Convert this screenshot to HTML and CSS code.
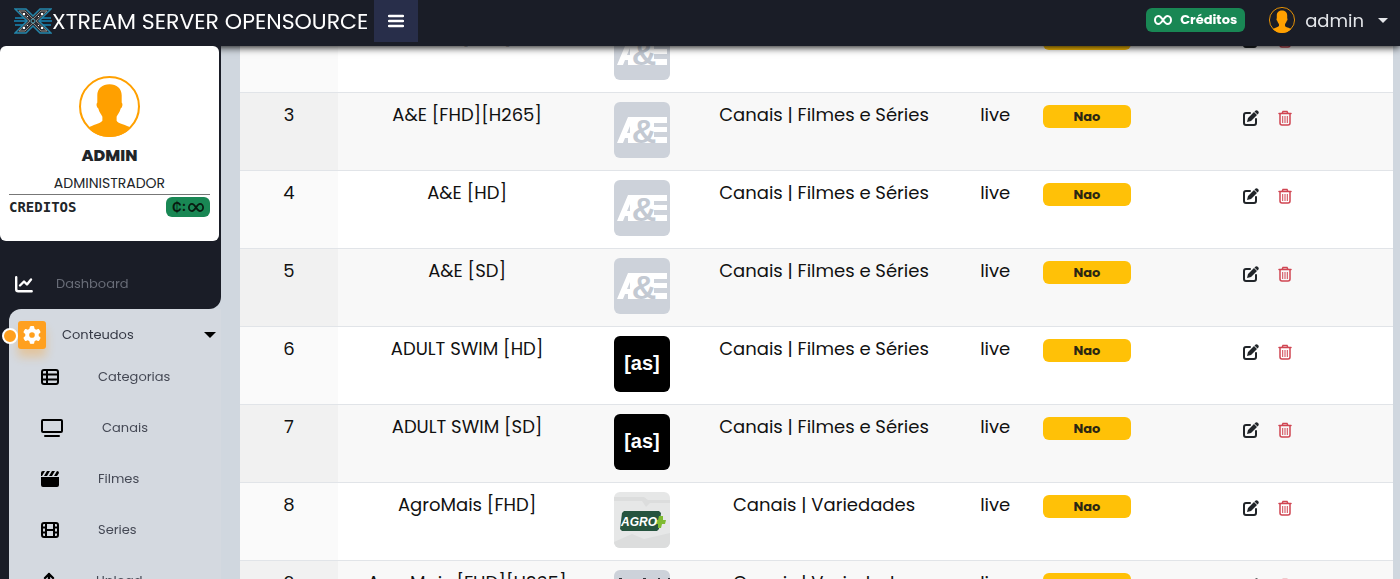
FILE: index.html
```html
<!DOCTYPE html>
<html lang="pt-BR">
<head>
    <meta charset="UTF-8">
    <meta name="viewport" content="width=device-width, initial-scale=1.0">
    <title>Xtream Server Opensource</title>
    <link rel="stylesheet" href="styles.css">
</head>
<body>
    <!-- Ícones usados mais de uma vez -->
    <svg class="sprite" aria-hidden="true">
        <symbol id="avatar" viewBox="0 0 60 60">
            <circle cx="30" cy="30" r="29" fill="none" stroke="currentColor" stroke-width="2"/>
            <path fill="currentColor" d="M30 8c7 0 12 4 12 11v7c1 1 1 3 0 5l-1 1c-1 4-3 6-4 8v4c1 3 10 4 14 7-5 6-12 9-21 9s-16-3-21-9c4-3 12-4 14-7v-4c-1-2-3-4-4-8l-1-1c-1-2-1-4 0-5v-7c0-7 5-11 12-11z"/>
        </symbol>
        <symbol id="infinity" viewBox="0 0 18 10">
            <path fill="none" stroke="currentColor" stroke-width="2" d="M9 5C7 2 6 1 4.500 1a3.500 4 0 0 0 0 8C6 9 7 8 9 5s3-4 4.500-4a3.500 4 0 0 1 0 8C12 9 11 8 9 5z"/>
        </symbol>
        <symbol id="edit" viewBox="0 0 16 16">
            <path fill="none" stroke="currentColor" stroke-width="2" stroke-linecap="round" d="M7 3H3a2 2 0 0 0-2 2v8a2 2 0 0 0 2 2h8a2 2 0 0 0 2-2V9"/>
            <path fill="currentColor" d="M11 2l3 3-6 6-4 1 1-4zM12 1c1-1 2-1 3 0s1 2 0 3l-.5.5-3-3z"/>
        </symbol>
        <symbol id="trash" viewBox="0 0 14 16">
            <path fill="none" stroke="currentColor" stroke-width="1.500" stroke-linecap="round" d="M1 3.500h12M4 3.500l1-2h4l1 2M2 3.500V13a2 2 0 0 0 2 2h6a2 2 0 0 0 2-2V3.500"/>
            <path fill="none" stroke="currentColor" d="M4.700 6v7M7 6v7M9.300 6v7"/>
        </symbol>
        <symbol id="ae" viewBox="0 0 56 56">
            <rect width="56" height="56" fill="#cdd2da"/>
            <path fill="#fff" d="M3 41L14 15h39v6H40v4h13v5H40v5h13v6H14v-5h-3l-2 5zM13 31h3v-7z"/>
        </symbol>
        <symbol id="agro" viewBox="0 0 56 56">
            <rect width="56" height="56" fill="#e6e7e7"/>
            <path fill="#dcdddd" d="M0 5h30l4 3h22v3H36l-4 4-4-6H0zM0 50l18-8 12 5 26-6v15H0z"/>
            <path fill="#26543f" d="M10 19h35l2 2-2 16-2 2H8l-2-2 2-16z"/>
            <path fill="#7fbb32" d="M45 24h4v4h3l-1 4h-3l-1 4h-3v-4h-4l1-4h3z"/>
        </symbol>
    </svg>

    <header class="navbar">
        <a class="brand" href="#">
            <svg class="brand-logo" viewBox="0 0 38 26" aria-hidden="true">
                <path stroke="#176b91" stroke-width="2" d="M1 10h36M0 13h38M1 17h36"/>
                <path fill="#2b2e35" stroke="#2385aa" stroke-width="1.500" d="M1 1h11l7 7 7-7h11L25 13l12 12H26l-7-7-7 7H1l12-12z"/>
                <path fill="none" stroke="#8f8782" stroke-width="1" d="M5 3h6l8 8 8-8h6L22 13l11 10h-6l-8-8-8 8H5l11-10z"/>
                <circle cx="19" cy="13" r="2" fill="#222" stroke="#55a4bb"/>
                <path fill="#fff" d="M9 5h2v2H9zM27 5h2v2h-2zM9 19h2v2H9zM27 19h2v2h-2zM13 8h1v1h-1zM24 8h1v1h-1zM13 17h1v1h-1zM24 17h1v1h-1z"/>
            </svg>
            <span>XTREAM SERVER OPENSOURCE</span>
        </a>
        <button class="toggle" type="button" aria-label="Menu">
            <svg width="16" height="14" viewBox="0 0 16 14"><path stroke="#fff" stroke-width="2.400" stroke-linecap="round" d="M1 2h14M1 7h14M1 12h14"/></svg>
        </button>
        <div class="nav-right">
            <a class="credits" href="#"><svg width="18" height="10"><use href="#infinity"/></svg>Créditos</a>
            <button class="user" type="button">
                <svg class="orange" width="26" height="26"><use href="#avatar"/></svg>
                <span>admin</span>
                <i class="caret"></i>
            </button>
        </div>
    </header>

    <aside class="sidebar">
        <div class="side-top">
            <div class="profile">
                <svg class="orange" width="61" height="61"><use href="#avatar"/></svg>
                <h2>ADMIN</h2>
                <p class="role">ADMINISTRADOR</p>
                <div class="balance">
                    <strong>CREDITOS</strong>
                    <span class="balance-badge">₵: <svg width="16" height="9"><use href="#infinity"/></svg></span>
                </div>
            </div>
            <a class="item dashboard" href="#">
                <svg width="18" height="17" viewBox="0 0 18 17"><path fill="none" stroke="#fff" stroke-width="2.400" stroke-linecap="round" stroke-linejoin="round" d="M1.200 1.200v12q0 2 2 2h13.500M5 9.500l4-4 3 3 4-5"/></svg>
                <span>Dashboard</span>
            </a>
        </div>
        <nav class="side-menu">
            <div class="panel">
                <button class="group" type="button">
                    <i class="dot"></i>
                    <span class="gear">
                        <svg width="18" height="18" viewBox="0 0 512 512"><path fill="#fff" d="M495.900 166.600c3.200 8.700 .5 18.400-6.400 24.600l-43.300 39.400c1.100 8.300 1.700 16.800 1.700 25.400s-.6 17.100-1.700 25.400l43.300 39.400c6.900 6.200 9.600 15.900 6.400 24.600c-4.400 11.900-9.700 23.300-15.800 34.300l-4.700 8.100c-6.600 11-14 21.400-22.100 31.200c-5.900 7.200-15.700 9.600-24.500 6.800l-55.700-17.700c-13.400 10.300-28.200 18.900-44 25.400l-12.500 57.100c-2 9.100-9 16.300-18.200 17.800c-13.800 2.300-28 3.500-42.500 3.500s-28.700-1.200-42.500-3.500c-9.200-1.500-16.200-8.700-18.200-17.800l-12.500-57.100c-15.800-6.500-30.600-15.100-44-25.400L83.100 425.900c-8.800 2.800-18.600 .3-24.500-6.800c-8.100-9.800-15.500-20.200-22.100-31.200l-4.700-8.100c-6.100-11-11.400-22.400-15.800-34.300c-3.200-8.700-.5-18.400 6.400-24.600l43.300-39.400C64.600 273.100 64 264.600 64 256s.6-17.100 1.700-25.400L22.400 191.200c-6.900-6.200-9.600-15.900-6.400-24.600c4.400-11.900 9.700-23.300 15.800-34.300l4.700-8.100c6.600-11 14-21.400 22.100-31.200c5.900-7.200 15.700-9.600 24.500-6.800l55.700 17.700c13.400-10.300 28.200-18.900 44-25.400l12.500-57.100c2-9.100 9-16.300 18.200-17.800C227.300 1.200 241.500 0 256 0s28.700 1.200 42.500 3.500c9.200 1.500 16.200 8.700 18.200 17.800l12.500 57.100c15.800 6.500 30.600 15.100 44 25.400l55.700-17.700c8.800-2.800 18.600-.3 24.500 6.800c8.100 9.800 15.500 20.200 22.100 31.200l4.700 8.100c6.100 11 11.400 22.400 15.800 34.300zM256 336a80 80 0 1 0 0-160 80 80 0 1 0 0 160z"/></svg>
                    </span>
                    <span>Conteudos</span>
                    <i class="caret"></i>
                </button>
                <a class="item" href="#">
                    <svg width="18" height="16" viewBox="0 0 18 16"><path fill="none" stroke="#000" stroke-width="2" d="M3 1h12q2 0 2 2v10q0 2-2 2H3q-2 0-2-2V3q0-2 2-2zM1 5.500h16M1 10.500h16M6 1v14"/></svg>
                    <span>Categorias</span>
                </a>
                <a class="item" href="#">
                    <svg width="22" height="18" viewBox="0 0 22 18"><path fill="none" stroke="#000" stroke-width="2" stroke-linecap="round" d="M2 1h18q1 0 1 1v10q0 1-1 1H2q-1 0-1-1V2q0-1 1-1zM4 17h14"/></svg>
                    <span>Canais</span>
                </a>
                <a class="item" href="#">
                    <svg width="18" height="16" viewBox="0 0 18 16"><path d="M0 6h18v8q0 2-2 2H2q-2 0-2-2zM2 0h2L1 5H0V2q0-2 2-2zM6 0h3L6 5H3zM11 0h3l-3 5H8zM16 0q2 0 2 2l-2 3h-3z"/></svg>
                    <span>Filmes</span>
                </a>
                <a class="item" href="#">
                    <svg width="18" height="16" viewBox="0 0 18 16"><path fill="none" stroke="#000" stroke-width="2" d="M3 1h12q2 0 2 2v10q0 2-2 2H3q-2 0-2-2V3q0-2 2-2zM5 1v14M13 1v14M5 8h8M1 5.500h4M1 10.500h4M13 5.500h4M13 10.500h4"/></svg>
                    <span>Series</span>
                </a>
                <a class="item" href="#">
                    <svg width="16" height="18" viewBox="0 0 16 18"><path fill="none" stroke="#000" stroke-width="2.400" stroke-linecap="round" stroke-linejoin="round" d="M8 12V2M4 6l4-4 4 4M2 13v2q0 2 2 2h8q2 0 2-2v-2"/></svg>
                    <span>Upload</span>
                </a>
            </div>
        </nav>
    </aside>

    <main class="content">
        <table class="channels">
            <colgroup>
                <col class="col-id"><col class="col-name"><col class="col-logo"><col class="col-category"><col class="col-type"><col class="col-status"><col class="col-actions">
            </colgroup>
            <tbody>
                <tr>
                    <td>2</td>
                    <td>A&amp;E [FHD]</td>
                    <td><svg class="logo" viewBox="0 0 56 56"><use href="#ae"/><text x="30" y="41" class="logo-amp">&amp;</text></svg></td>
                    <td>Canais | Filmes e Séries</td>
                    <td>live</td>
                    <td><span class="status">Nao</span></td>
                    <td><div class="actions"><a class="edit" href="#" aria-label="Editar"><svg width="16" height="16"><use href="#edit"/></svg></a><a class="trash" href="#" aria-label="Apagar"><svg width="14" height="16"><use href="#trash"/></svg></a></div></td>
                </tr>
                <tr>
                    <td>3</td>
                    <td>A&amp;E [FHD][H265]</td>
                    <td><svg class="logo" viewBox="0 0 56 56"><use href="#ae"/><text x="30" y="41" class="logo-amp">&amp;</text></svg></td>
                    <td>Canais | Filmes e Séries</td>
                    <td>live</td>
                    <td><span class="status">Nao</span></td>
                    <td><div class="actions"><a class="edit" href="#" aria-label="Editar"><svg width="16" height="16"><use href="#edit"/></svg></a><a class="trash" href="#" aria-label="Apagar"><svg width="14" height="16"><use href="#trash"/></svg></a></div></td>
                </tr>
                <tr>
                    <td>4</td>
                    <td>A&amp;E [HD]</td>
                    <td><svg class="logo" viewBox="0 0 56 56"><use href="#ae"/><text x="30" y="41" class="logo-amp">&amp;</text></svg></td>
                    <td>Canais | Filmes e Séries</td>
                    <td>live</td>
                    <td><span class="status">Nao</span></td>
                    <td><div class="actions"><a class="edit" href="#" aria-label="Editar"><svg width="16" height="16"><use href="#edit"/></svg></a><a class="trash" href="#" aria-label="Apagar"><svg width="14" height="16"><use href="#trash"/></svg></a></div></td>
                </tr>
                <tr>
                    <td>5</td>
                    <td>A&amp;E [SD]</td>
                    <td><svg class="logo" viewBox="0 0 56 56"><use href="#ae"/><text x="30" y="41" class="logo-amp">&amp;</text></svg></td>
                    <td>Canais | Filmes e Séries</td>
                    <td>live</td>
                    <td><span class="status">Nao</span></td>
                    <td><div class="actions"><a class="edit" href="#" aria-label="Editar"><svg width="16" height="16"><use href="#edit"/></svg></a><a class="trash" href="#" aria-label="Apagar"><svg width="14" height="16"><use href="#trash"/></svg></a></div></td>
                </tr>
                <tr>
                    <td>6</td>
                    <td>ADULT SWIM [HD]</td>
                    <td><svg class="logo" viewBox="0 0 56 56"><rect width="56" height="56"/><text x="28" y="34" class="logo-as">[as]</text></svg></td>
                    <td>Canais | Filmes e Séries</td>
                    <td>live</td>
                    <td><span class="status">Nao</span></td>
                    <td><div class="actions"><a class="edit" href="#" aria-label="Editar"><svg width="16" height="16"><use href="#edit"/></svg></a><a class="trash" href="#" aria-label="Apagar"><svg width="14" height="16"><use href="#trash"/></svg></a></div></td>
                </tr>
                <tr>
                    <td>7</td>
                    <td>ADULT SWIM [SD]</td>
                    <td><svg class="logo" viewBox="0 0 56 56"><rect width="56" height="56"/><text x="28" y="34" class="logo-as">[as]</text></svg></td>
                    <td>Canais | Filmes e Séries</td>
                    <td>live</td>
                    <td><span class="status">Nao</span></td>
                    <td><div class="actions"><a class="edit" href="#" aria-label="Editar"><svg width="16" height="16"><use href="#edit"/></svg></a><a class="trash" href="#" aria-label="Apagar"><svg width="14" height="16"><use href="#trash"/></svg></a></div></td>
                </tr>
                <tr>
                    <td>8</td>
                    <td>AgroMais [FHD]</td>
                    <td><svg class="logo" viewBox="0 0 56 56"><use href="#agro"/><text x="25" y="34" class="logo-agro">AGRO</text></svg></td>
                    <td>Canais | Variedades</td>
                    <td>live</td>
                    <td><span class="status">Nao</span></td>
                    <td><div class="actions"><a class="edit" href="#" aria-label="Editar"><svg width="16" height="16"><use href="#edit"/></svg></a><a class="trash" href="#" aria-label="Apagar"><svg width="14" height="16"><use href="#trash"/></svg></a></div></td>
                </tr>
                <tr>
                    <td>9</td>
                    <td>AgroMais [FHD][H265]</td>
                    <td><svg class="logo" viewBox="0 0 56 56"><rect width="56" height="56" fill="#cdd2da"/><path stroke="#30343b" stroke-width="2" d="M5 9h3M29 9h3M44 9h2M54 9h2"/></svg></td>
                    <td>Canais | Variedades</td>
                    <td>live</td>
                    <td><span class="status">Nao</span></td>
                    <td><div class="actions"><a class="edit" href="#" aria-label="Editar"><svg width="16" height="16"><use href="#edit"/></svg></a><a class="trash" href="#" aria-label="Apagar"><svg width="14" height="16"><use href="#trash"/></svg></a></div></td>
                </tr>
            </tbody>
        </table>
    </main>
</body>
</html>
```
FILE: styles.css
```css
* {
    box-sizing: border-box;
}
body {
    margin: 0;
    height: 100vh;
    overflow: hidden;
    background-color: #d0d7df;
    color: #111;
    font-family: Poppins, Inter, sans-serif;
}
a {
    color: inherit;
    text-decoration: none;
}
button {
    border: 0;
    padding: 0;
    background: none;
    color: inherit;
    font: inherit;
    cursor: pointer;
}
svg {
    display: block;
    flex: none;
}
.sprite {
    position: absolute;
    width: 0;
    height: 0;
}
.orange {
    color: #ffa000;
}
.caret {
    border: 5px solid transparent;
    border-top-color: currentColor;
    border-bottom: 0;
}

/* Barra superior */
.navbar {
    position: fixed;
    top: 0;
    left: 0;
    right: 0;
    z-index: 2;
    display: flex;
    align-items: flex-start;
    height: 46px;
    padding-left: 14px;
    background-color: #1a1d27;
    color: #fff;
    box-shadow: 0 1px 8px #000;
}
.brand {
    display: flex;
    align-items: center;
    height: 42px;
    font-size: 22px;
    white-space: nowrap;
}
.brand-logo {
    width: 38px;
    height: 26px;
}
.toggle {
    display: flex;
    align-items: center;
    justify-content: center;
    width: 44px;
    height: 42px;
    margin-left: 6px;
    background-color: #282e4a;
}
.nav-right {
    display: flex;
    align-items: center;
    gap: 24px;
    height: 40px;
    margin-left: auto;
    padding-right: 12px;
}
.credits {
    display: flex;
    align-items: center;
    gap: 8px;
    height: 24px;
    padding: 0 8px;
    border-radius: 6px;
    background-color: #198754;
    font-size: 13px;
    font-weight: 700;
}
.user {
    display: flex;
    align-items: center;
    gap: 10px;
    font-size: 18px;
    color: #e4e6ea;
}
.user .caret {
    margin-left: 4px;
}

/* Menu lateral */
.sidebar {
    position: fixed;
    top: 46px;
    bottom: 0;
    left: 0;
    z-index: 3;
    display: flex;
    flex-direction: column;
    width: 221px;
    overflow: hidden;
}
.side-top {
    padding-right: 2px;
    background-color: #1a1d27;
    border-bottom-right-radius: 12px;
}
.profile {
    display: flex;
    flex-direction: column;
    align-items: center;
    height: 195px;
    padding: 30px 9px 0;
    border-radius: 6px;
    background-color: #fff;
    color: #212529;
}
.profile h2 {
    margin: 7px 0 4px;
    font-size: 16px;
    line-height: 24px;
    font-weight: 800;
}
.role {
    width: 100%;
    margin: 0;
    padding: 2px 0;
    border-bottom: 1px solid #777;
    font-size: 14px;
    line-height: 18px;
    text-align: center;
}
.balance {
    display: flex;
    align-items: center;
    justify-content: space-between;
    width: 100%;
    padding-top: 2px;
    font-family: "DejaVu Sans Mono", monospace;
    font-size: 14px;
}
.balance-badge {
    display: flex;
    align-items: center;
    gap: 2px;
    height: 20px;
    padding: 0 6px;
    border-radius: 6px;
    background-color: #198754;
    color: #081b10;
    font-family: Inter, sans-serif;
    font-size: 13px;
    font-weight: 700;
}
.item {
    display: flex;
    align-items: center;
    gap: 39px;
    height: 51px;
    padding-left: 32px;
    font-size: 13px;
    color: #454955;
}
.dashboard {
    gap: 23px;
    height: 68px;
    padding: 18px 0 0 15px;
    color: #686c77;
}
.side-menu {
    flex: 1;
    padding-left: 9px;
    background: linear-gradient(to right, #1a1d27 24px, #d4d9e0 24px);
}
.panel {
    height: 100%;
    border-top-left-radius: 12px;
    background-color: #d4d9e0;
}
.group {
    position: relative;
    display: flex;
    align-items: center;
    gap: 16px;
    width: 100%;
    height: 42px;
    padding: 10px 5px 0 9px;
    font-size: 13px;
    color: #353945;
}
.group .caret {
    margin-left: auto;
    border-width: 6px;
    border-bottom: 0;
    color: #000;
}
.gear {
    display: flex;
    align-items: center;
    justify-content: center;
    width: 28px;
    height: 28px;
    border-radius: 3px;
    background-color: #ffa01f;
    box-shadow: 0 8px 10px #ffa01f55;
}
/* Marcador do grupo ativo, por cima da borda */
.dot {
    position: absolute;
    top: 19px;
    left: -7px;
    width: 16px;
    height: 16px;
    border: 2px solid #fff;
    border-radius: 50%;
    background-color: #ffa01f;
}

/* Tabela de canais */
.content {
    height: 100%;
    padding: 14px 7px 0 240px;
    overflow: hidden;
}
.channels {
    width: 100%;
    table-layout: fixed;
    border-collapse: collapse;
    background-color: #fff;
    font-size: 18px;
    line-height: 26px;
    text-align: center;
}
.col-id { width: 8.5%; }
.col-name { width: 22.4%; }
.col-logo { width: 8%; }
.col-category { width: 23.5%; }
.col-type { width: 6.2%; }
.col-status { width: 9.7%; }
.col-actions { width: 21.7%; }
.channels td {
    padding: 9px 8px 12px;
    border-top: 1px solid #e1e4e8;
    vertical-align: top;
    white-space: nowrap;
}
.channels tr:nth-child(even) {
    background-color: #f8f8f8;
}
.channels td:first-child {
    background-color: #fafafa;
}
.channels tr:nth-child(even) td:first-child {
    background-color: #f1f1f1;
}
.logo {
    width: 56px;
    height: 56px;
    margin: 0 auto;
    border-radius: 6px;
}
.logo text {
    fill: #fff;
    text-anchor: middle;
}
.logo .logo-amp {
    font: 700 34px "Liberation Sans", sans-serif;
    fill: #c3c9d2;
}
.logo-as {
    font: 700 20px "Liberation Sans", sans-serif;
}
.logo-agro {
    font: italic 700 12px "Liberation Sans", sans-serif;
}
.status {
    display: block;
    width: 88px;
    margin: 3px auto 0;
    border-radius: 6px;
    background-color: #ffc107;
    color: #2b2713;
    font-size: 13px;
    line-height: 23px;
    font-weight: 700;
}
.actions {
    display: flex;
    justify-content: center;
    gap: 19px;
    padding-top: 8px;
}
.edit {
    color: #212529;
}
.trash {
    color: #d04552;
}
```
